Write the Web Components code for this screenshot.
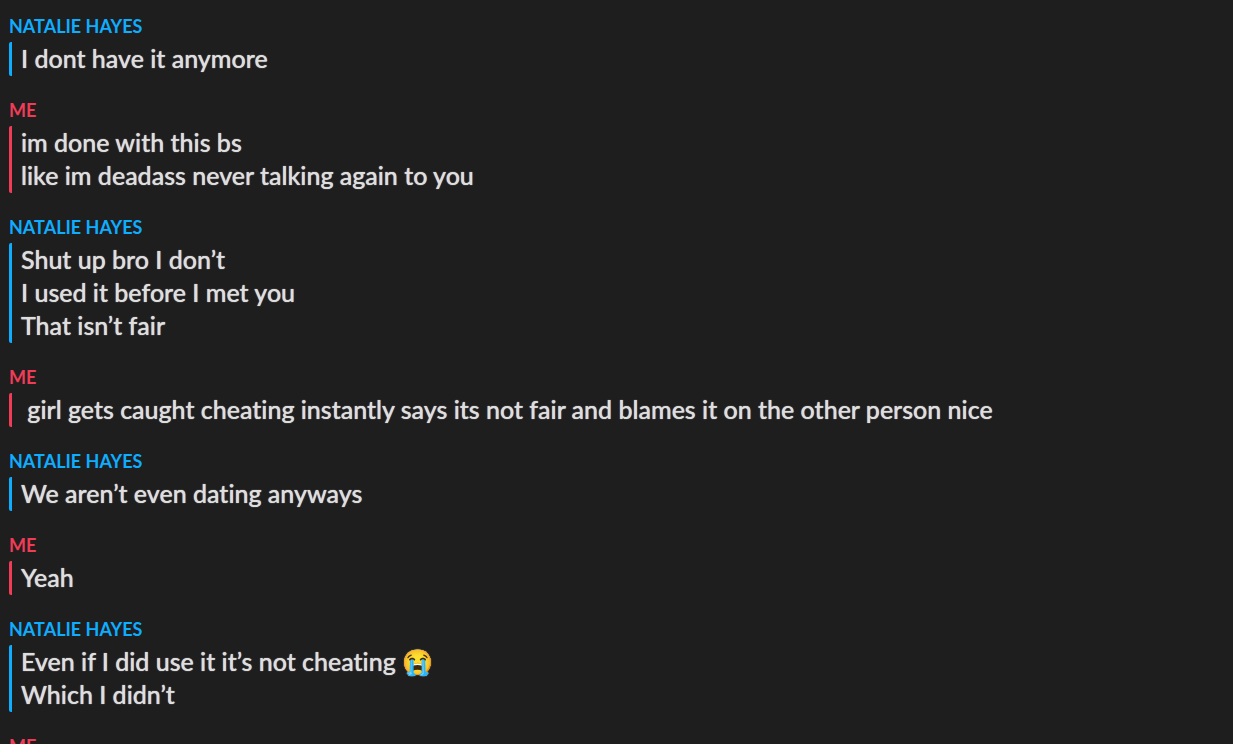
<!DOCTYPE html>
<html lang="en">
<head>
<meta charset="utf-8">
<meta name="viewport" content="width=device-width, initial-scale=1">
<title>Chat</title>
<style>
html, body { margin: 0; background: #1e1e1e; }
body { height: 100vh; overflow: hidden; font-family: Lato, "Noto Sans", sans-serif; font-variant-ligatures: none; color: #dedede; }
</style>
</head>
<body>
<chat-log>
  <chat-group sender="Natalie Hayes"><chat-line>I dont have it anymore</chat-line></chat-group>
  <chat-group sender="Me" own><chat-line>im done with this bs</chat-line><chat-line>like im deadass never talking again to you</chat-line></chat-group>
  <chat-group sender="Natalie Hayes"><chat-line>Shut up bro I don’t</chat-line><chat-line>I used it before I met you</chat-line><chat-line>That isn’t fair</chat-line></chat-group>
  <chat-group sender="Me" own><chat-line> girl gets caught cheating instantly says its not fair and blames it on the other person nice</chat-line></chat-group>
  <chat-group sender="Natalie Hayes"><chat-line>We aren’t even dating anyways</chat-line></chat-group>
  <chat-group sender="Me" own><chat-line>Yeah</chat-line></chat-group>
  <chat-group sender="Natalie Hayes"><chat-line>Even if I did use it it’s not cheating 😭</chat-line><chat-line>Which I didn’t</chat-line></chat-group>
  <chat-group sender="Me" own></chat-group>
</chat-log>
<script>
class ChatLog extends HTMLElement {
  constructor() {
    super();
    this.attachShadow({ mode: "open" }).innerHTML = `
      <style>
        :host { display: flex; flex-direction: column; gap: 24px; padding: 16px 9px 0; }
      </style>
      <slot></slot>`;
  }
}
class ChatGroup extends HTMLElement {
  constructor() {
    super();
    this.attachShadow({ mode: "open" }).innerHTML = `
      <style>
        :host { display: flex; flex-direction: column; gap: 6px; --accent: #0eadff; }
        :host([own]) { --accent: #f23c57; }
        header { font-size: 18px; line-height: 20px; font-weight: 700; text-transform: uppercase; color: var(--accent); }
        .lines { border-left: 3px solid var(--accent); border-radius: 2px 0 0 2px; padding: 0 0 1px 9px; }
      </style>
      <header></header>
      <div class="lines"><slot></slot></div>`;
  }
  connectedCallback() {
    this.shadowRoot.querySelector("header").textContent = this.getAttribute("sender");
  }
}
class ChatLine extends HTMLElement {
  constructor() {
    super();
    this.attachShadow({ mode: "open" }).innerHTML = `
      <style>
        :host { display: block; }
        p { margin: 0; font-size: 25px; line-height: 33px; font-weight: 500; white-space: pre-wrap; text-shadow: 0 0 1px #dedede; }
      </style>
      <p><slot></slot></p>`;
  }
}
customElements.define("chat-log", ChatLog);
customElements.define("chat-group", ChatGroup);
customElements.define("chat-line", ChatLine);
</script>
</body>
</html>
